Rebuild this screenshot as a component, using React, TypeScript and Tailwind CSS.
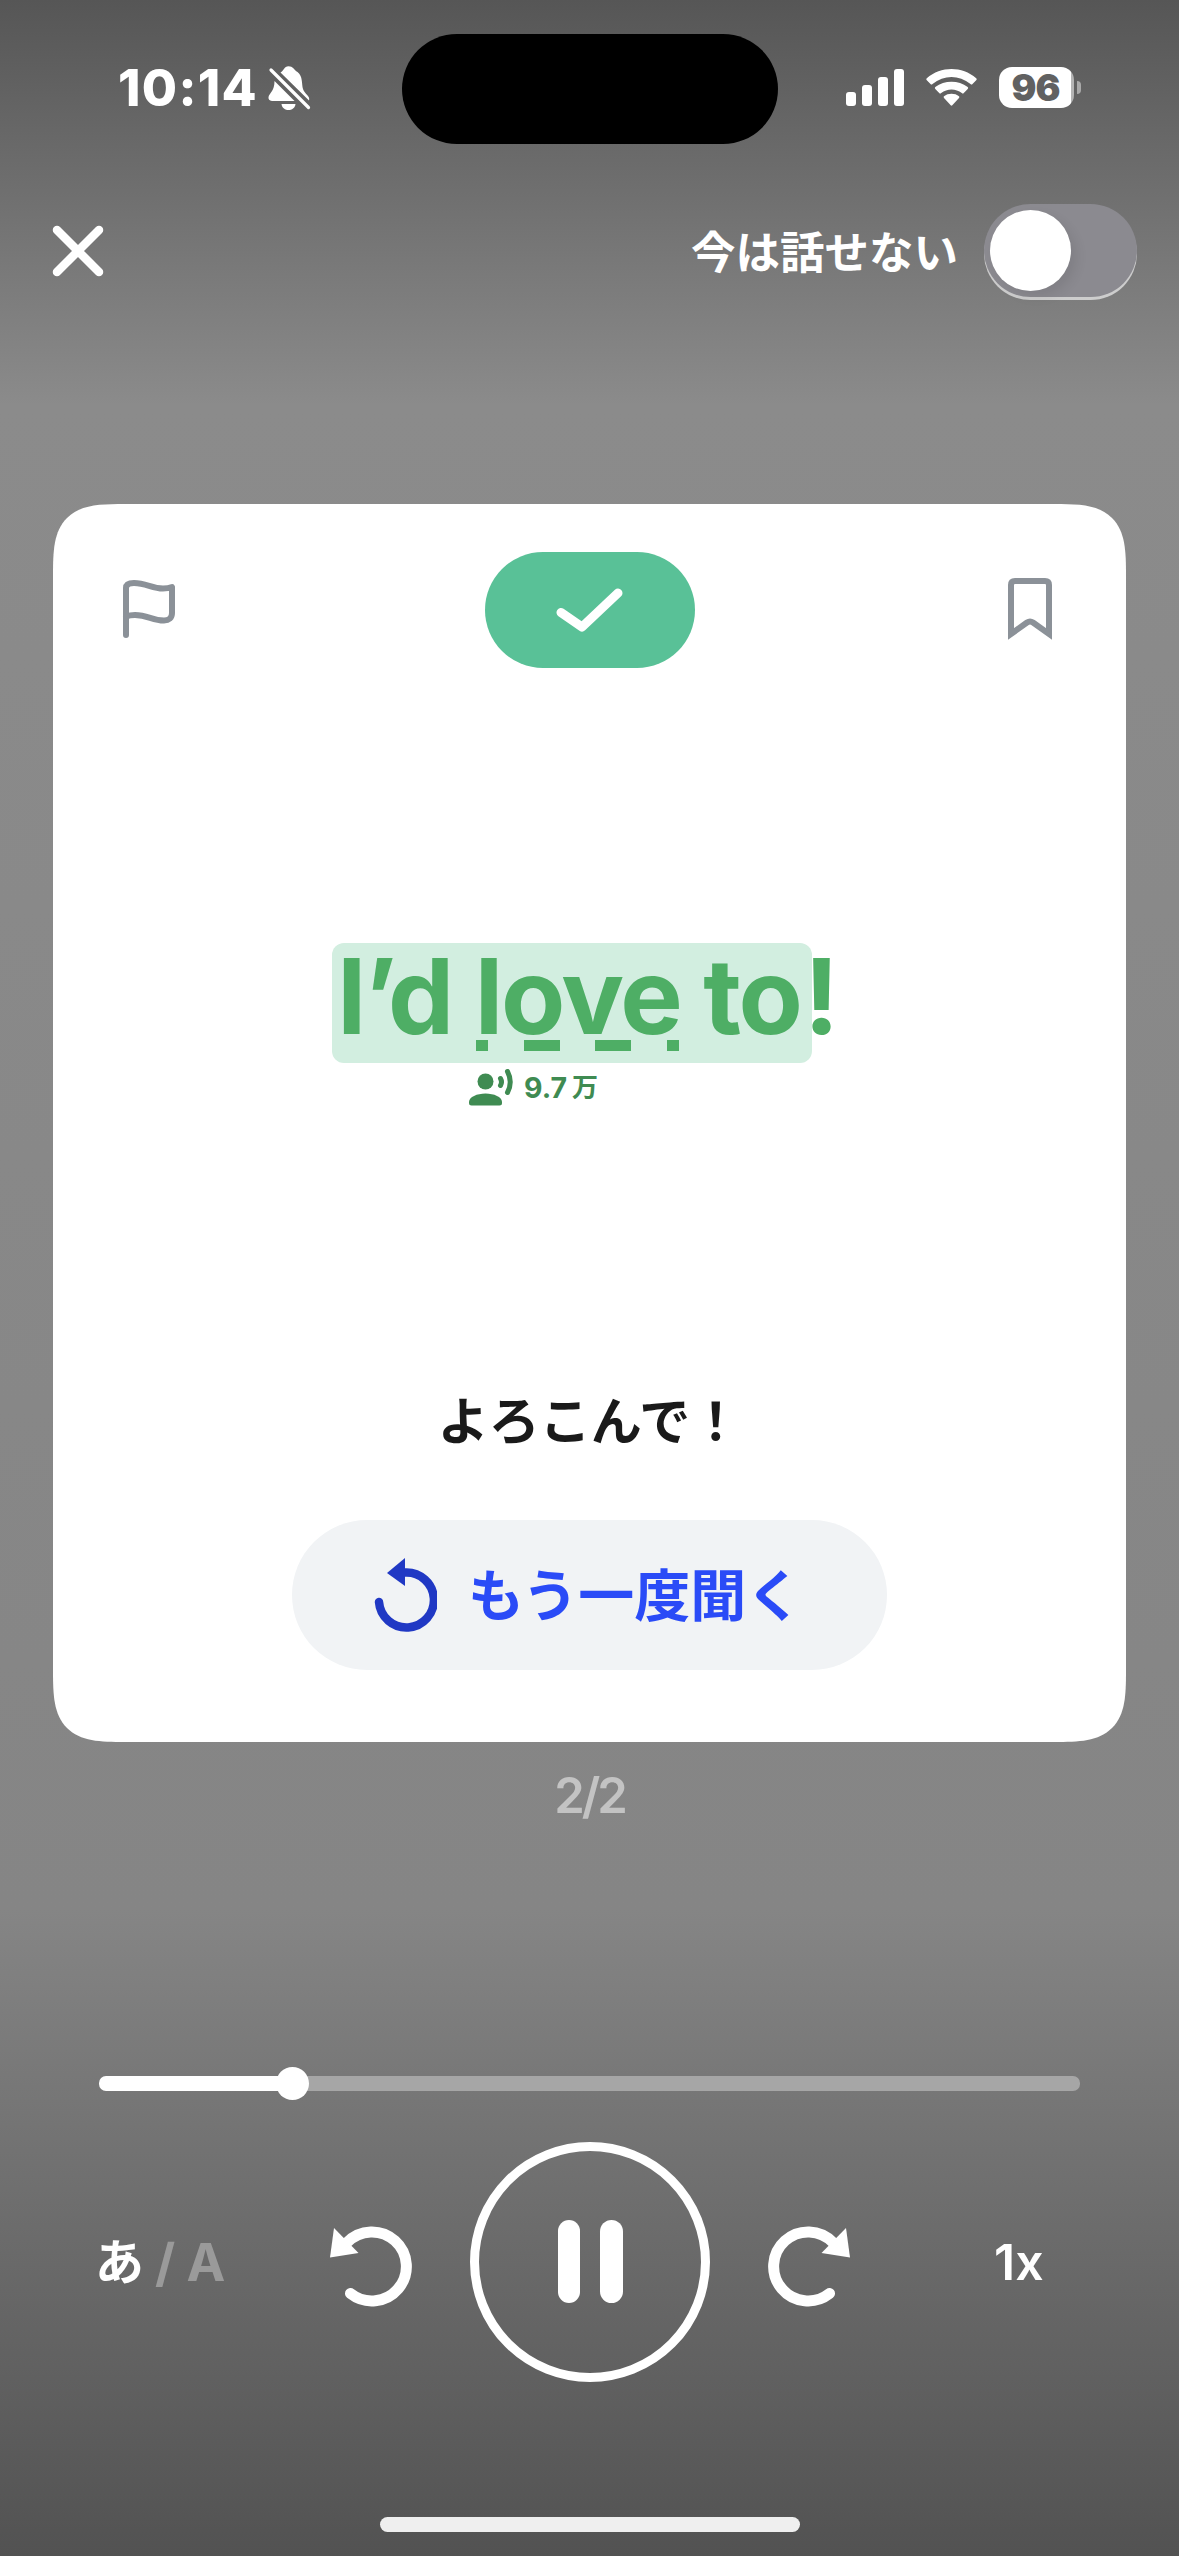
import { useState } from "react"

const PHRASE_DASHES = ["w-3", "w-9", "w-9", "w-3"]

function StatusBar() {
	return (
		<div className="flex h-[178px] items-start text-white">
			<div className="flex w-[402px] items-center pt-[56px] pl-[118px]">
				<span className="w-[148px] text-[51px] leading-[64px] font-extrabold tracking-[1.300px]">
					10:14
				</span>
				<svg width="46" height="48" viewBox="0 0 46 48" fill="none">
					<path
						d="M8.500 17C8.500 27 3.500 29 2.500 33Q2 36.500 6 37H28.500Z M14.500 8.500C18 7 18 2.300 22.500 2.300S28 6 31.500 8C37 12 35.500 20 37 25C38.500 30 44.500 32 43 36.500Z"
						fill="#fff"
					/>
					<path d="M15.500 40H29.500C28.500 48 16.500 48 15.500 40Z" fill="#fff" />
					<path d="M5 6L42.500 43.500" stroke="#fff" strokeWidth="3.200" strokeLinecap="round" />
				</svg>
			</div>
			<div className="mt-[34px] h-[110px] w-[376px] rounded-full bg-black" />
			<div className="flex items-end pt-[67px] pl-[68px]">
				<div className="mb-[2px] flex items-end gap-[6px]">
					<div className="h-[14px] w-[10px] rounded-[3px] bg-white" />
					<div className="h-[21px] w-[10px] rounded-[3px] bg-white" />
					<div className="h-[29px] w-[10px] rounded-[3px] bg-white" />
					<div className="h-[37px] w-[10px] rounded-[3px] bg-white" />
				</div>
				<svg className="mb-[2px] ml-[22px]" width="51" height="37" viewBox="0 0 51 37" fill="#fff">
					<path d="M.8 11.200Q-.2 10.200.8 9.200C15-3 36-3 50.200 9.200Q51.200 10.200 50.200 11.200L46.500 15Q45.500 16 44.500 15C33 5.600 18 5.600 6.500 15Q5.500 16 4.500 15Z" />
					<path d="M9.300 20Q8.300 19 9.300 18C18.500 11 32.500 11 41.700 18Q42.700 19 41.700 20L37.800 24Q36.800 25 35.800 24C30 19.300 21 19.300 15.200 24Q14.200 25 13.200 24Z" />
					<path d="M18 29Q17.200 28 18 27.300C22 24 29 24 33 27.300Q33.800 28 33 29L26.300 36.300Q25.500 37 24.700 36.300Z" />
				</svg>
				<div className="ml-[22px] flex h-[41px] w-[75px] items-center justify-center rounded-[13px] bg-linear-to-r from-white from-96% to-[#b4b4b4] to-96% pr-[2px] text-[37px] font-black tracking-[-1px] text-[#616161]">
					96
				</div>
				<div className="mb-[14px] ml-[3px] h-[13px] w-[4px] rounded-r-full bg-[#a9a9a9]" />
			</div>
		</div>
	)
}

function Header() {
	const [silent, setSilent] = useState(false)

	return (
		<div className="flex h-[326px] items-start justify-between pt-[26px] pr-[42px] pl-[52px] text-white">
			<svg className="mt-[21px]" width="52" height="52" viewBox="0 0 52 52" fill="none">
				<path d="M5 5L47 47M47 5L5 47" stroke="#fff" strokeWidth="8.500" strokeLinecap="round" />
			</svg>
			<label className="flex items-center gap-[26px]">
				<span className="pt-[5px] text-[44.500px] leading-[64px] font-semibold">今は話せない</span>
				<button
					type="button"
					onClick={() => setSilent(!silent)}
					className="flex h-[93px] w-[153px] items-center rounded-full bg-[#8b8a90] px-[6px] shadow-[0_3px_0_#cdcdcd]"
				>
					<span className="size-[81px] rounded-full bg-white shadow-[6px_6px_12px_rgba(0,0,0,0.08)]" />
				</button>
			</label>
		</div>
	)
}

function Phrase() {
	return (
		<div className="mt-[275px] flex flex-col">
			<div className="ml-[279px] flex">
				<div className="relative h-[120px] w-[480px] rounded-[12px] bg-[#d2eee0] pl-[5px]">
					<h1 className="text-[105px] leading-[106px] font-bold tracking-[-2.200px] whitespace-nowrap text-[#4eae65]">
						I’d love to<span className="ml-[3px]">!</span>
					</h1>
					<div className="absolute top-[97px] left-[144px] flex h-[11px] gap-[35.500px]">
						{PHRASE_DASHES.map((width, i) => (
							<div key={i} className={`${width} bg-[#4eae65]`} />
						))}
					</div>
				</div>
			</div>
			<div className="mt-[6px] ml-[416px] flex h-[37px] items-start text-[#3f8b52]">
				<svg width="45" height="37" viewBox="0 0 45 37" fill="none">
					<circle cx="16.500" cy="12.500" r="8" fill="currentColor" />
					<path
						d="M0 33C0 28 8 24.500 16.500 24.500S33 28 33 33V34Q33 36.500 30.500 36.500H2.500Q0 36.500 0 34Z"
						fill="currentColor"
					/>
					<path
						d="M31.500 9.500Q33.500 13 31.500 16.500M38.500 2.500Q44 13 38.500 23.500"
						stroke="currentColor"
						strokeWidth="5"
						strokeLinecap="round"
					/>
				</svg>
				<span className="ml-[10px] pt-px text-[28.500px] leading-[36px] font-bold">9.7</span>
				<span className="ml-[5px] pt-px text-[26px] leading-[36px] font-bold">万</span>
			</div>
		</div>
	)
}

function Card() {
	return (
		<div className="mx-[53px] flex h-[1238px] flex-col rounded-[54px] bg-white supports-[corner-shape:squircle]:rounded-[72px] supports-[corner-shape:squircle]:[corner-shape:superellipse(1.68)]">
			<div className="flex items-start justify-between pt-[48px] pr-[73px] pl-[69px]">
				<svg
					className="mt-[27px]"
					width="54"
					height="60"
					viewBox="122 579 54 60"
					fill="none"
					stroke="#8b9198"
					strokeWidth="6"
					strokeLinecap="round"
					strokeLinejoin="round"
				>
					<path d="M126 635V588C126 584 130 583 134 583C146 583 152 588.500 163 588.500Q168 588.500 172 587V613C172 618 169 620.500 164 620.500C152 620.500 148 615 135 615Q130 615 126 616.500" />
				</svg>
				<div className="mr-1 flex h-[116px] w-[210px] items-center justify-center rounded-full bg-[#59c197]">
					<svg width="68" height="44" viewBox="0 0 68 44" fill="none">
						<path
							d="M5 24.500L26 39L62 5"
							stroke="#fff"
							strokeWidth="9"
							strokeLinecap="round"
							strokeLinejoin="round"
						/>
					</svg>
				</div>
				<svg className="mt-[25px]" width="46" height="64" viewBox="1007 577 46 64" fill="none">
					<path
						d="M1011 634V585Q1011 581 1015 581H1045Q1049 581 1049 585V634L1033 622.500Q1030 620.500 1027 622.500Z"
						stroke="#8b9198"
						strokeWidth="6"
					/>
				</svg>
			</div>
			<Phrase />
			<p className="mt-[280px] text-center text-[51px] leading-[72px] font-semibold text-[#1a1a1a]">
				よろこんで！
			</p>
			<button
				type="button"
				className="mt-[62px] flex h-[150px] w-[595px] items-center self-center rounded-full bg-[#f1f3f5] pl-[81px] text-[#2a4bf7]"
			>
				<svg className="-mt-px" width="64" height="76" viewBox="0 0 64 76" fill="none">
					<path
						d="M32 15.500A27.500 27.500 0 1 1 6 45"
						stroke="#2038c4"
						strokeWidth="8.500"
						strokeLinecap="round"
					/>
					<path d="M14 16L32 1V29Z" fill="#2038c4" />
				</svg>
				<span className="ml-[31px] pt-[2px] text-[56px] leading-[80px] font-semibold">もう一度聞く</span>
			</button>
		</div>
	)
}

function SkipIcon({ className }: { className?: string }) {
	return (
		<svg className={className} width="84" height="84" viewBox="0 0 84 84" fill="none">
			<path
				d="M18 19.500A34.500 34.500 0 1 1 21.500 70.500"
				stroke="#fff"
				strokeWidth="11"
				strokeLinecap="round"
			/>
			<path d="M1 34.500L5 5L29.500 30Z" fill="#fff" />
		</svg>
	)
}

function Player() {
	return (
		<div className="mt-[239px] flex flex-col px-[99px] text-white">
			<div className="flex h-[33px] items-center">
				<div className="h-[15px] w-[179px] rounded-l-[7px] bg-white" />
				<div className="z-10 -mx-[2px] size-[33px] rounded-full bg-white" />
				<div className="h-[15px] flex-1 rounded-r-[7px] bg-[#a6a6a6]" />
			</div>
			<div className="mt-[42px] flex h-[240px] items-center">
				<div className="flex w-[231px] items-center pt-[2px] leading-[64px] font-bold whitespace-nowrap">
					<span className="-ml-[4px] w-[60px] text-[49px]">あ</span>
					<span className="text-[52px] tracking-[-0.500px] text-[#9a9a9a]">/ A</span>
				</div>
				<SkipIcon className="mt-[6px] -ml-px" />
				<div className="ml-[57px] flex size-[240px] items-center justify-center gap-[20px] rounded-full border-[9px] border-white">
					<div className="-mt-px h-[83px] w-[22.500px] rounded-full bg-white" />
					<div className="-mt-px h-[83px] w-[22.500px] rounded-full bg-white" />
				</div>
				<SkipIcon className="mt-[6px] ml-[57px] -scale-x-100" />
				<span className="ml-[143px] text-[50px] leading-[64px] font-semibold">1x</span>
			</div>
		</div>
	)
}

export default function App() {
	return (
		<div className="flex h-[2556px] w-[1179px] flex-col overflow-hidden bg-[linear-gradient(to_bottom,#565656_0px,#8b8b8b_405px,#858585_1910px,#525252_2556px)] font-[Inter,'Noto_Sans_CJK_JP',sans-serif]">
			<StatusBar />
			<Header />
			<Card />
			<div className="mt-[22px] text-center text-[49px] leading-[64px] font-semibold tracking-[-3px] text-[#c3c3c3]">
				2/2
			</div>
			<Player />
			<div className="mt-[135px] h-[15px] w-[420px] self-center rounded-full bg-[#efefef]" />
		</div>
	)
}
